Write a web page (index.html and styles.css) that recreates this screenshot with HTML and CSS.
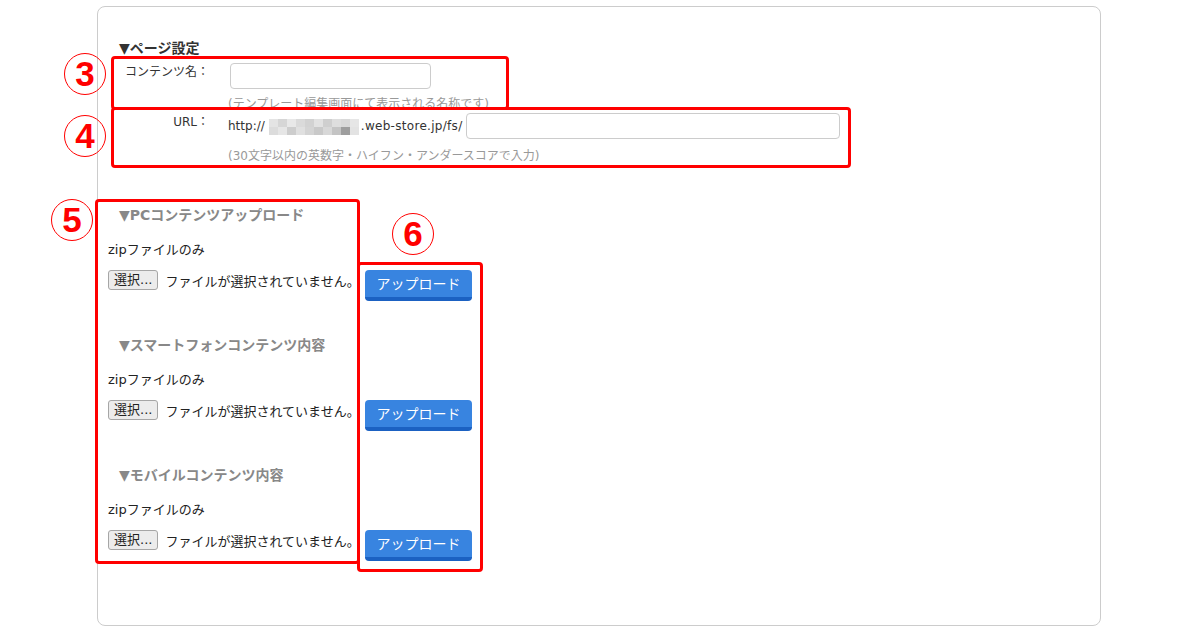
FILE: index.html
```html
<!DOCTYPE html>
<html lang="ja">
<head>
  <meta charset="UTF-8" />
  <meta name="viewport" content="width=device-width, initial-scale=1.0"/>
  <title>ページ設定</title>
  <link rel="stylesheet" href="styles.css">
</head>
<body>

  <div class="panel">
    <h3 class="sec-title">▼ページ設定</h3>

    <div class="field first">
      <label class="field-label">コンテンツ名：</label>
      <div class="ctrl">
        <input type="text" class="text-input name-input">
        <p class="hint">(テンプレート編集画面にて表示される名称です)</p>
      </div>
    </div>

    <div class="field">
      <label class="field-label">URL：</label>
      <div class="ctrl">
        <div class="url-row">
          <span>http://</span>
          <span class="mosaic">
            <i style="background:#e4e4e4"></i><i style="background:#d6d6d6"></i><i style="background:#e8e8e8"></i><i style="background:#dadada"></i><i style="background:#d2d2d2"></i><i style="background:#e2e2e2"></i><i style="background:#cfcfcf"></i><i style="background:#dedede"></i><i style="background:#d9d9d9"></i><i style="background:#e6e6e6"></i>
            <i style="background:#dcdcdc"></i><i style="background:#e6e6e6"></i><i style="background:#cdcdcd"></i><i style="background:#e0e0e0"></i><i style="background:#d4d4d4"></i><i style="background:#c9c9c9"></i><i style="background:#d8d8d8"></i><i style="background:#c4c4c4"></i><i style="background:#9e9e9e"></i><i style="background:#e3e3e3"></i>
          </span>
          <span class="domain">.web-store.jp/fs/</span>
          <input type="text" class="text-input url-input">
        </div>
        <p class="hint hint-url">(30文字以内の英数字・ハイフン・アンダースコアで入力)</p>
      </div>
    </div>

    <div class="uploads">
      <div class="upload-sec">
        <h3 class="sec-title muted">▼PCコンテンツアップロード</h3>
        <p class="zip">zipファイルのみ</p>
        <div class="file-row">
          <div class="file-pick">
            <button type="button" class="file-btn">選択...</button>
            <span>ファイルが選択されていません。</span>
          </div>
          <button type="button" class="upload-btn">アップロード</button>
        </div>
      </div>

      <div class="upload-sec">
        <h3 class="sec-title muted">▼スマートフォンコンテンツ内容</h3>
        <p class="zip">zipファイルのみ</p>
        <div class="file-row">
          <div class="file-pick">
            <button type="button" class="file-btn">選択...</button>
            <span>ファイルが選択されていません。</span>
          </div>
          <button type="button" class="upload-btn">アップロード</button>
        </div>
      </div>

      <div class="upload-sec">
        <h3 class="sec-title muted">▼モバイルコンテンツ内容</h3>
        <p class="zip">zipファイルのみ</p>
        <div class="file-row">
          <div class="file-pick">
            <button type="button" class="file-btn">選択...</button>
            <span>ファイルが選択されていません。</span>
          </div>
          <button type="button" class="upload-btn">アップロード</button>
        </div>
      </div>
    </div>
  </div>

  <!-- annotation marks drawn over the screenshot -->
  <div class="mark box-3"></div>
  <div class="mark box-4"></div>
  <div class="mark box-5"></div>
  <div class="mark box-6"></div>
  <div class="num num-3">3</div>
  <div class="num num-4">4</div>
  <div class="num num-5">5</div>
  <div class="num num-6">6</div>

</body>
</html>
```

FILE: styles.css
```css
body {
  margin: 0;
  position: relative;
  font-family: "DejaVu Sans", "Noto Sans CJK JP", sans-serif;
  font-size: 12px;
  color: #222;
  background: #fff;
}
p { margin: 0; }

.panel {
  margin: 6px 0 0 97px;
  width: 1004px;
  height: 620px;
  box-sizing: border-box;
  border: 1px solid #ccc;
  border-radius: 8px;
  padding: 32px 0 0 10px;
}

.sec-title {
  margin: 0 0 0 11px;
  font-size: 14px;
  line-height: 18px;
  font-weight: bold;
  color: #333;
}
.sec-title.muted { color: #888; }

.field {
  display: grid;
  grid-template-columns: 101px auto;
  column-gap: 19px;
}
.field.first { margin-top: 6px; }
.field-label {
  text-align: right;
  line-height: 18px;
  color: #333;
}

.text-input {
  box-sizing: border-box;
  height: 26px;
  margin: 0;
  border: 1px solid #ccc;
  border-radius: 4px;
  background: #fff;
}
.name-input { width: 201px; margin-left: 2px; }
.url-input { flex: 1; min-width: 0; margin-left: 3px; }

.hint {
  color: #999;
  line-height: 18px;
  margin-top: 6px;
}
.hint-url { margin-top: 8px; }

.url-row {
  width: 612px;
  display: flex;
  align-items: center;
  color: #333;
}
.mosaic {
  display: grid;
  grid-template-columns: repeat(10, 9px);
  grid-template-rows: 8px 8px;
  margin: 1px 0 0 4px;
}
.mosaic i { display: block; }
.domain { margin-left: 2px; letter-spacing: 0.3px; }

.uploads { margin-top: 41px; }
.upload-sec { margin-bottom: 35px; }
.zip {
  margin-top: 17px;
  font-size: 13px;
  line-height: 18px;
}
.file-row {
  display: flex;
  align-items: flex-start;
  margin-top: 11px;
}
.file-pick {
  width: 257px;
  flex-shrink: 0;
  display: flex;
  align-items: center;
  gap: 7px;
  font-size: 13px;
  white-space: nowrap;
}
.file-btn {
  height: 20px;
  padding: 0 5px;
  font-family: inherit;
  font-size: 13px;
  line-height: 18px;
  color: #222;
  border: 1px solid #a6a6a6;
  border-radius: 3px;
  background: #ececec;
}
.upload-btn {
  width: 107px;
  height: 31px;
  box-sizing: border-box;
  padding: 0 0 1px;
  font-family: inherit;
  font-size: 14px;
  color: #fff;
  border: none;
  border-bottom: 4px solid #1b61c2;
  border-radius: 4px;
  background: #3884e0;
  cursor: pointer;
}

/* red annotation marks */
.mark {
  position: absolute;
  box-sizing: border-box;
  border: 3px solid #f00;
  border-radius: 4px;
}
.box-3 { left: 111px; top: 56px; width: 398px; height: 54px; }
.box-4 { left: 111px; top: 107px; width: 740px; height: 61px; }
.box-5 { left: 95px; top: 199px; width: 265px; height: 365px; }
.box-6 { left: 357px; top: 262px; width: 126px; height: 310px; }

.num {
  position: absolute;
  width: 42px;
  height: 42px;
  box-sizing: border-box;
  border: 1.5px solid #f00;
  border-radius: 50%;
  color: #f00;
  font-family: "Liberation Sans", Arial, sans-serif;
  font-weight: bold;
  font-size: 35px;
  line-height: 39px;
  text-align: center;
}
.num-3 { left: 64px; top: 53px; }
.num-4 { left: 64px; top: 115px; }
.num-5 { left: 51px; top: 199px; }
.num-6 { left: 392px; top: 213px; }
```
